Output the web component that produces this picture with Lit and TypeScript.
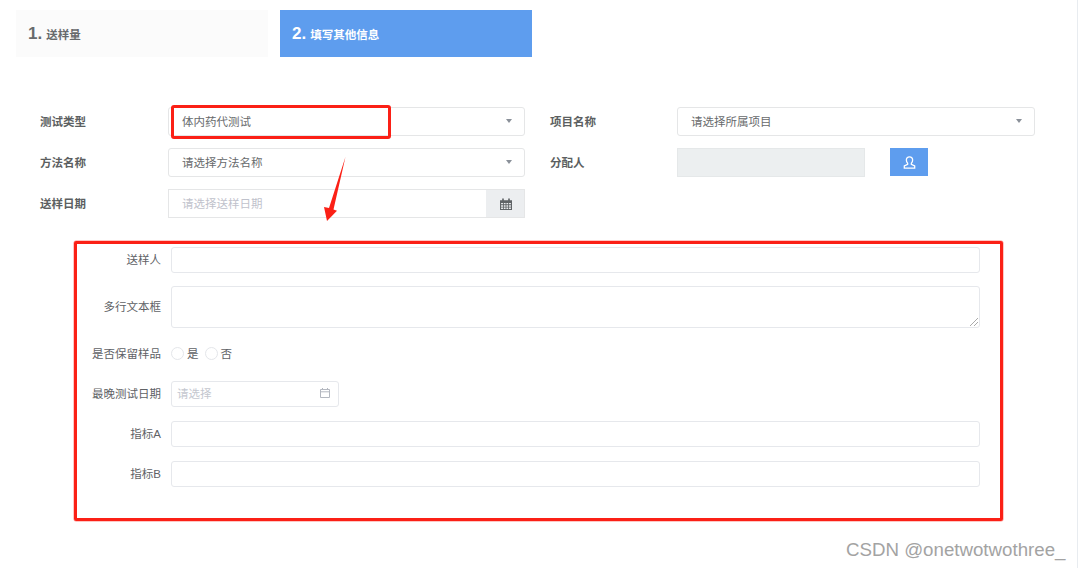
import { LitElement, html, css } from "lit";
import { customElement } from "lit/decorators.js";

const caret = html`<svg class="caret" width="6" height="4" viewBox="0 0 6 4"><path d="M0 0h6L3 4z" fill="#8a9099"/></svg>`;

@customElement("app-root")
export class AppRoot extends LitElement {
  static styles = css`
    :host { display: block; width: 1080px; height: 568px; position: relative; overflow: hidden; background: #fff;
      font-family: "Liberation Sans", "Noto Sans CJK SC", sans-serif; color: #676a6c; }
    .page { padding: 10px 0 0 16px; }
    .steps { display: flex; gap: 12px; height: 47px; }
    .step { width: 252px; display: flex; align-items: baseline; line-height: 48px; padding-left: 12px; box-sizing: border-box; background: #fbfbfb; color: #676a6c; font-weight: 700; font-size: 11.5px; }
    .step b { font-size: 17px; margin-right: 4px; }
    .step.two { background: #5e9dee; color: #fff; }
    .top { margin-top: 50px; margin-left: 24px; display: grid; grid-template-columns: 128px 357px 25px 127px 358px; grid-auto-rows: 29px; row-gap: 12px; font-size: 11.5px; align-items: center; }
    .lbl { font-weight: 700; color: #5c5f61; padding-bottom: 1px; }
    .ctl { height: 29px; box-sizing: border-box; border: 1px solid #e5e6e7; border-radius: 3px; display: flex; align-items: center; justify-content: space-between; padding: 0 12px 1px 13px; color: #676a6c; background: #fff; }
    .gap { grid-column: 3; }
    .assign { display: flex; gap: 25px; align-items: flex-start; }
    .ro { width: 188px; height: 29px; box-sizing: border-box; background: #eceff0; border: 1px solid #e5e8e9; }
    .btn { width: 38px; height: 28px; background: #5e9dee; display: flex; align-items: center; justify-content: center; }
    .date { display: flex; height: 29px; box-sizing: border-box; border: 1px solid #e5e6e7; background: #fff; }
    .date .ph { flex: 1; padding-left: 13px; line-height: 28px; color: #bfc2cc; }
    .date .addon { width: 38px; padding-left: 1px; box-sizing: border-box; background: #eceef0; display: flex; align-items: center; justify-content: center; }
    .box { margin: 23px 0 0 58px; width: 929px; height: 280px; box-sizing: border-box; border: 3px solid #fb2016; border-radius: 2px; box-shadow: 0 0 0 0.5px rgba(251, 32, 22, 0.5); padding: 3px 0 0 0; font-size: 11.5px; color: #606266; display: flex; flex-direction: column; }
    .row { display: flex; align-items: center; }
    .row label { width: 84px; text-align: right; margin-right: 10px; flex: none; padding-bottom: 3px; }
    .field { width: 809px; height: 26px; box-sizing: border-box; border: 1px solid #e6e8ec; border-radius: 3px; background: #fff; flex: none; }
    .area { height: 42px; position: relative; }
    .grip { position: absolute; right: 0; bottom: 0; }
    .r1 { height: 26px; }
    .r2 { height: 42px; margin-top: 13px; }
    .r3 { height: 26px; margin-top: 13px; }
    .r4 { height: 26px; margin-top: 14px; }
    .r5 { height: 26px; margin-top: 14px; }
    .r6 { height: 26px; margin-top: 14px; }
    .radio { display: flex; align-items: center; gap: 3px; margin-right: 6px; padding-bottom: 2px; }
    .dot { width: 11px; height: 11px; border: 1px solid #e4e6ea; border-radius: 50%; background: #fff; }
    .pick { width: 168px; height: 26px; box-sizing: border-box; border: 1px solid #e6e8ec; border-radius: 3px; display: flex; align-items: center; justify-content: space-between; padding: 0 7px 2px 5px; color: #c4c7cf; }
    .focus { position: absolute; left: 171px; top: 105px; width: 220px; height: 34px; box-sizing: border-box; border: 3px solid #fb2016; border-radius: 3px; pointer-events: none; }
    .arrow { position: absolute; left: 320px; top: 153px; pointer-events: none; }
    .mark { position: absolute; left: 846px; top: 539px; font-size: 18.7px; line-height: 22px; color: #a3a3a3; white-space: nowrap; }
    .edge { position: absolute; left: 1077px; top: 0; width: 1px; height: 568px; background: #e8ecf0; }
  `;

  render() {
    return html`
      <div class="page">
        <div class="steps">
          <div class="step"><b>1.</b>送样量</div>
          <div class="step two"><b>2.</b>填写其他信息</div>
        </div>
        <div class="top">
          <div class="lbl">测试类型</div>
          <div class="ctl"><span>体内药代测试</span>${caret}</div>
          <div class="gap"></div>
          <div class="lbl">项目名称</div>
          <div class="ctl"><span>请选择所属项目</span>${caret}</div>

          <div class="lbl">方法名称</div>
          <div class="ctl"><span>请选择方法名称</span>${caret}</div>
          <div class="gap"></div>
          <div class="lbl">分配人</div>
          <div class="assign">
            <div class="ro"></div>
            <div class="btn">
              <svg width="13" height="13" viewBox="0 0 12 12" fill="none" stroke="#fff" stroke-width="1.2">
                <path d="M6 .8c-1.800 0-2.900 1.300-2.900 3 0 1.200.5 2.200 1.200 2.900v1.100L1.200 9.200v2h9.600v-2L7.700 7.800V6.700c.7-.7 1.200-1.700 1.200-2.900 0-1.700-1.100-3-2.900-3z"/>
              </svg>
            </div>
          </div>

          <div class="lbl">送样日期</div>
          <div class="date">
            <span class="ph">请选择送样日期</span>
            <span class="addon">
              <svg width="12" height="12" viewBox="0 0 11 11">
                <path fill="#5f6366" d="M0 2h2V.5h1.500V2h4V.5H9V2h2v9H0zM1 4.500v1.300h1.700V4.500zm2.500 0v1.300h1.600V4.500zm2.400 0v1.300h1.600V4.500zm2.400 0v1.300H10V4.500zM1 6.600v1.400h1.700V6.600zm2.500 0V8h1.600V6.600zm2.400 0V8h1.600V6.600zm2.400 0V8H10V6.600zM1 8.800V10h1.700V8.800zm2.500 0V10h1.600V8.800zm2.400 0V10h1.600V8.800zm2.400 0V10H10V8.800z" fill-rule="evenodd"/>
              </svg>
            </span>
          </div>
        </div>

        <div class="box">
          <div class="row r1"><label>送样人</label><div class="field"></div></div>
          <div class="row r2"><label>多行文本框</label>
            <div class="field area">
              <svg class="grip" width="10" height="10" viewBox="0 0 10 10" stroke="#aaaaaa" fill="none"><path d="M1 9l8-8M5 9l4-4"/></svg>
            </div>
          </div>
          <div class="row r3"><label>是否保留样品</label>
            <span class="radio"><span class="dot"></span>是</span>
            <span class="radio"><span class="dot"></span>否</span>
          </div>
          <div class="row r4"><label>最晚测试日期</label>
            <div class="pick"><span>请选择</span>
              <svg width="12" height="12" viewBox="0 0 12 12" fill="none" stroke="#b4b8c0"><path d="M1.500 2.500h9v8h-9zM1.500 4.800h9M3.500 1v2M8.500 1v2"/></svg>
            </div>
          </div>
          <div class="row r5"><label>指标A</label><div class="field"></div></div>
          <div class="row r6"><label>指标B</label><div class="field"></div></div>
        </div>
      </div>
      <div class="focus"></div>
      <svg class="arrow" width="30" height="72" viewBox="0 0 30 72"><path d="M25.500 3.700L13.500 56.500 17 57.700 7 68 4 54 9 55z" fill="#fb2016"/></svg>
      <div class="mark">CSDN @onetwotwothree_</div>
      <div class="edge"></div>
    `;
  }
}
